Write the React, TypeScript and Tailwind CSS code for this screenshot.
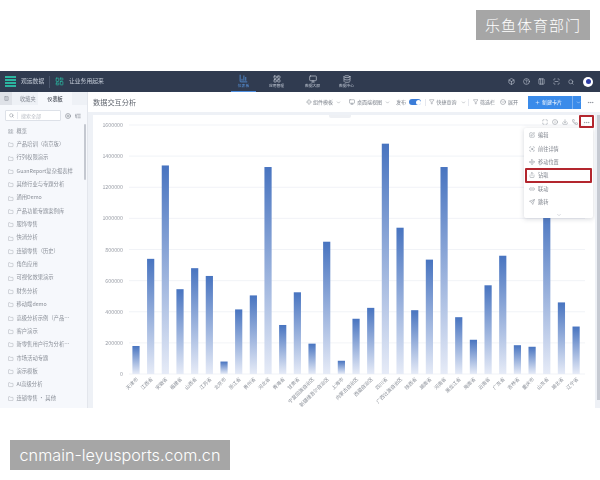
import React from "react";
import { LayoutDashboard, Search, PlusCircle, ListTree, Folder, LayoutGrid, BarChart3, Monitor, Database, Box, CircleHelp, Columns3, ScanLine, ChevronDown, Filter, CircleChevronDown, Plus, Ellipsis, Maximize, Info, Download, Phone, SquarePen, ScanSearch, Move, Share, Link2, Send, Component } from "lucide-react";

const folders = ["产品培训（南京版）", "行列权限演示", "GuanReport复杂报表样", "其他行业与专题分析", "通用Demo", "产品功能专题案例库", "服饰零售", "快消分析", "连锁零售（历史）", "角色应用", "可视化效果演示", "财务分析", "移动端demo", "高级分析示例（产品…", "客户演示", "新零售用户行为分析…", "市场活动专题", "演示模板", "AI高级分析", "连锁零售 · 其他"];

const bars: [string, number][] = [["天津市", 180000], ["江西省", 740000], ["安徽省", 1340000], ["福建省", 545000], ["山西省", 680000], ["江苏省", 630000], ["北京市", 80000], ["浙江省", 415000], ["贵州省", 505000], ["河北省", 1330000], ["青海省", 315000], ["甘肃省", 525000], ["宁夏回族自治区", 195000], ["新疆维吾尔自治区", 850000], ["上海市", 85000], ["内蒙古自治区", 355000], ["西藏自治区", 425000], ["四川省", 1480000], ["广西壮族自治区", 940000], ["陕西省", 410000], ["湖南省", 735000], ["河南省", 1330000], ["黑龙江省", 365000], ["海南省", 220000], ["云南省", 570000], ["广东省", 760000], ["吉林省", 185000], ["重庆市", 175000], ["山东省", 1060000], ["湖北省", 460000], ["辽宁省", 305000]];

const ticks = [1600000, 1400000, 1200000, 1000000, 800000, 600000, 400000, 200000, 0];

const font = "'Noto Sans CJK SC','Liberation Sans',sans-serif";

function Chart() {
  const y0 = 259;
  const scale = 249 / 1600000;
  return (
    <svg width="502" height="293" className="block">
      <defs>
        <linearGradient id="barFill" x1="0" y1="0" x2="0" y2="1">
          <stop offset="0" stopColor="#4874c0" />
          <stop offset="1" stopColor="#e6ebf7" />
        </linearGradient>
      </defs>
      {ticks.map((t) => {
        const y = y0 - t * scale;
        return (
          <g key={t}>
            <line x1="36" x2="492" y1={y} y2={y} stroke="#eef0f5" strokeWidth="0.8" />
            <text x="30" y={y + 2} textAnchor="end" fontSize="5.3" fill="#9a9ea7" fontFamily={font}>{t}</text>
          </g>
        );
      })}
      {bars.map(([name, v], i) => {
        const cx = 43 + i * 14.67;
        const h = v * scale;
        return (
          <g key={name}>
            <rect x={cx - 3.6} y={y0 - h} width="7.2" height={h} fill="url(#barFill)" />
            <text transform={`translate(${cx + 2.5},${y0 + 5.5}) rotate(-45)`} textAnchor="end" fontSize="4.9" fill="#8b9099" fontFamily={font}>{name}</text>
          </g>
        );
      })}
    </svg>
  );
}

function Menu() {
  const items: [React.ComponentType<{ size?: number; className?: string }>, string][] = [[SquarePen, "编辑"], [ScanSearch, "前往详情"], [Move, "移动位置"], [Share, "钻取"], [Link2, "联动"], [Send, "跳转"]];
  return (
    <div className="absolute left-[431px] top-[13px] w-[69px] h-[90px] bg-white rounded-[2px] shadow-[0_1px_5px_rgba(60,70,90,0.22)] pt-[0.5px] flex flex-col text-[5.2px] text-[#80858e]">
      {items.map(([I, t]) => (
        <div key={t} className="h-[13.4px] flex items-center gap-[3px] pl-[5px]">
          <I size={6} className="text-[#8b9098]" />
          <span>{t}</span>
        </div>
      ))}
      <div className="flex justify-center mt-[3px]"><ChevronDown size={6} className="text-[#b8bcc4]" /></div>
    </div>
  );
}

export default function App() {
  return (
    <div className="w-[600px] h-[480px] bg-white overflow-hidden flex flex-col" style={{ fontFamily: font }}>
      <div className="flex justify-end pt-[10px] pr-[10px]">
        <div className="w-[114px] h-[30px] bg-[#a6a6a6] text-white text-[15px] font-light flex items-center justify-center tracking-[1px]">乐鱼体育部门</div>
      </div>

      <div className="mt-[31px] h-[337px] flex flex-col blur-[0.5px] bg-[#eef1f6]">
        {/* top bar */}
        <div className="h-[21px] bg-[#303b50] flex items-center text-[#c5ccd8] shrink-0 relative">
          <div className="ml-[5px] w-[11px] flex flex-col gap-[1px]">
            <span className="h-[2px] bg-[#2bb5a0]" /><span className="h-[2px] bg-[#2bb5a0]" /><span className="h-[2px] bg-[#2bb5a0]" /><span className="h-[2px] bg-[#2bb5a0]" />
          </div>
          <span className="ml-[5px] text-[5.8px] w-[24px]">观远数据</span>
          <span className="ml-[4px] w-px h-[12px] bg-[#4a566c]" />
          <LayoutDashboard size={9} className="ml-[5px] text-[#2bb5a0]" />
          <span className="ml-[5px] text-[5.8px] w-[36px]">让业务用起来</span>
          <div className="ml-[126px] w-[25px] h-[21px] flex flex-col items-center justify-center border-b border-[#4f8fe0] text-[#5a9be8]">
            <BarChart3 size={9} /><span className="text-[3.8px]">仪表板</span>
          </div>
          <div className="ml-[8px] w-[25px] flex flex-col items-center"><LayoutGrid size={8} /><span className="text-[3.8px]">应用管理</span></div>
          <div className="ml-[11px] w-[25px] flex flex-col items-center"><Monitor size={8} /><span className="text-[3.8px]">数据大屏</span></div>
          <div className="ml-[9px] w-[25px] flex flex-col items-center"><Database size={8} /><span className="text-[3.8px]">数据中心</span></div>
          <div className="ml-[149px] flex items-center gap-[8px]">
            <Box size={7} /><CircleHelp size={7} /><Columns3 size={7} /><ScanLine size={7} /><Search size={6} />
          </div>
          <span className="ml-[9px] w-[10px] h-[10px] rounded-full bg-white flex items-center justify-center"><span className="w-[5px] h-[5px] rounded-full bg-[#2f3fa8]" /></span>
        </div>

        <div className="flex-1 flex min-h-0">
          {/* sidebar */}
          <div className="w-[88px] bg-[#f6f8fc] border-r border-[#e3e6ec] shrink-0 relative">
            <div className="h-[13px] flex items-center bg-[#eef1f6] text-[5.2px] text-[#858a94]">
              <span className="w-[12px] h-[13px] bg-[#dfe2e8] flex items-center justify-center"><Columns3 size={5} /></span>
              <span className="ml-[8px] w-[18px]">收藏夹</span>
              <span className="ml-[0px] w-[34px] h-[13px] bg-[#f6f8fc] flex items-center justify-center text-[#4a4f59] font-medium">仪表板</span>
            </div>
            <div className="mt-[5px] flex items-center pl-[5px]">
              <div className="w-[56px] h-[11px] border border-[#dde1e8] rounded-[1px] bg-white flex items-center text-[5px] text-[#b8bcc4]">
                <Search size={5} className="ml-[3px] mr-[3px] text-[#7d838d]" />
                <span className="border-l border-[#e8eaef] pl-[3px]">搜索全部</span>
              </div>
              <PlusCircle size={6} className="ml-[4px] text-[#6e747e]" />
              <ListTree size={6} className="ml-[4px] text-[#6e747e]" />
            </div>
            <div className="mt-[4px] flex flex-col text-[5.3px] text-[#8b9099] pl-[8px]">
              <div className="h-[13.35px] flex items-center gap-[3px]"><LayoutGrid size={5.5} strokeWidth={1.5} /><span>概览</span></div>
              {folders.map((f) => (
                <div key={f} className="h-[13.35px] flex items-center gap-[3px] whitespace-nowrap"><Folder size={5.5} strokeWidth={1.5} className="shrink-0" /><span>{f}</span></div>
              ))}
            </div>
            <div className="absolute right-[1px] top-[32px] w-[2px] h-[56px] bg-[#c4c8d0] rounded-full" />
          </div>

          {/* main */}
          <div className="flex-1 min-w-0 flex flex-col">
            <div className="h-[20px] bg-white flex items-center text-[5px] text-[#7b808a] shrink-0">
              <span className="ml-[5px] text-[7.2px] text-[#61666f] w-[50px] shrink-0">数据交互分析</span>
              <Component size={6} className="ml-[163px] shrink-0" />
              <span className="ml-[1px] shrink-0">组件模板</span>
              <ChevronDown size={5} className="ml-[3px] shrink-0" />
              <Monitor size={6} className="ml-[8px] shrink-0" />
              <span className="ml-[2px] shrink-0">桌面端视图</span>
              <ChevronDown size={5} className="ml-[3px] shrink-0" />
              <span className="ml-[6px] shrink-0">发布</span>
              <span className="ml-[3px] w-[12px] h-[6.5px] rounded-full bg-[#3b7dd8] flex justify-end items-center pr-[0.5px] shrink-0"><span className="w-[5px] h-[5px] rounded-full bg-white" /></span>
              <span className="ml-[4px] w-px h-[7px] bg-[#e6e8ee] shrink-0" />
              <Filter size={5.5} className="ml-[3px] shrink-0" />
              <span className="ml-[2px] shrink-0">快捷查询</span>
              <ChevronDown size={5} className="ml-[4px] shrink-0" />
              <span className="ml-[2px] w-px h-[7px] bg-[#e6e8ee] shrink-0" />
              <Filter size={5.5} className="ml-[4px] shrink-0" />
              <span className="ml-[2px] shrink-0">筛选栏</span>
              <CircleChevronDown size={6} className="ml-[5px] shrink-0" />
              <span className="ml-[2px] shrink-0">展开</span>
              <div className="ml-[10px] w-[53px] h-[13px] bg-[#3a8bea] text-white flex items-center shrink-0">
                <Plus size={5} className="ml-[7px]" />
                <span className="ml-[2px] w-[30px]">新建卡片</span>
                <span className="w-px h-[13px] bg-[#7ab0f0]" />
                <ChevronDown size={5} className="ml-[3px]" />
              </div>
              <Ellipsis size={7} className="ml-[6px] shrink-0" />
            </div>

            <div className="flex-1 min-h-0 flex pt-[3px] pl-[5px]">
              <div className="w-[502px] bg-white relative h-[293px] shrink-0 overflow-hidden">
                <span className="absolute left-[236px] top-[0px] w-[22px] h-[3px] bg-[#eef0f4] rounded-b-[2px]" />
                <Chart />
                <div className="absolute left-[449px] top-[4px] flex items-center gap-[4px] text-[#8b9098]">
                  <Maximize size={6} /><Info size={6} /><Download size={6} /><Phone size={6} />
                </div>
                <Ellipsis size={7} className="absolute left-[490px] top-[4px] text-[#8b9098]" />
                <Menu />
                <div className="absolute left-[486px] top-[0px] w-[15px] h-[13px] border-2 border-[#b3262e] rounded-[1px]" />
                <div className="absolute left-[432px] top-[53px] w-[67px] h-[15px] border-2 border-[#b3262e] rounded-[1px]" />
              </div>
              <div className="ml-[2px] w-[3px] bg-[#c6cad2] h-[285px]" />
            </div>
          </div>
        </div>
      </div>

      <div className="mt-[32px] ml-[10px] w-[220px] h-[30px] bg-[#a6a6a6] text-white text-[16.2px] font-light flex items-center justify-center" style={{ fontFamily: "Inter, 'Noto Sans', sans-serif" }}>cnmain-leyusports.com.cn</div>
    </div>
  );
}
